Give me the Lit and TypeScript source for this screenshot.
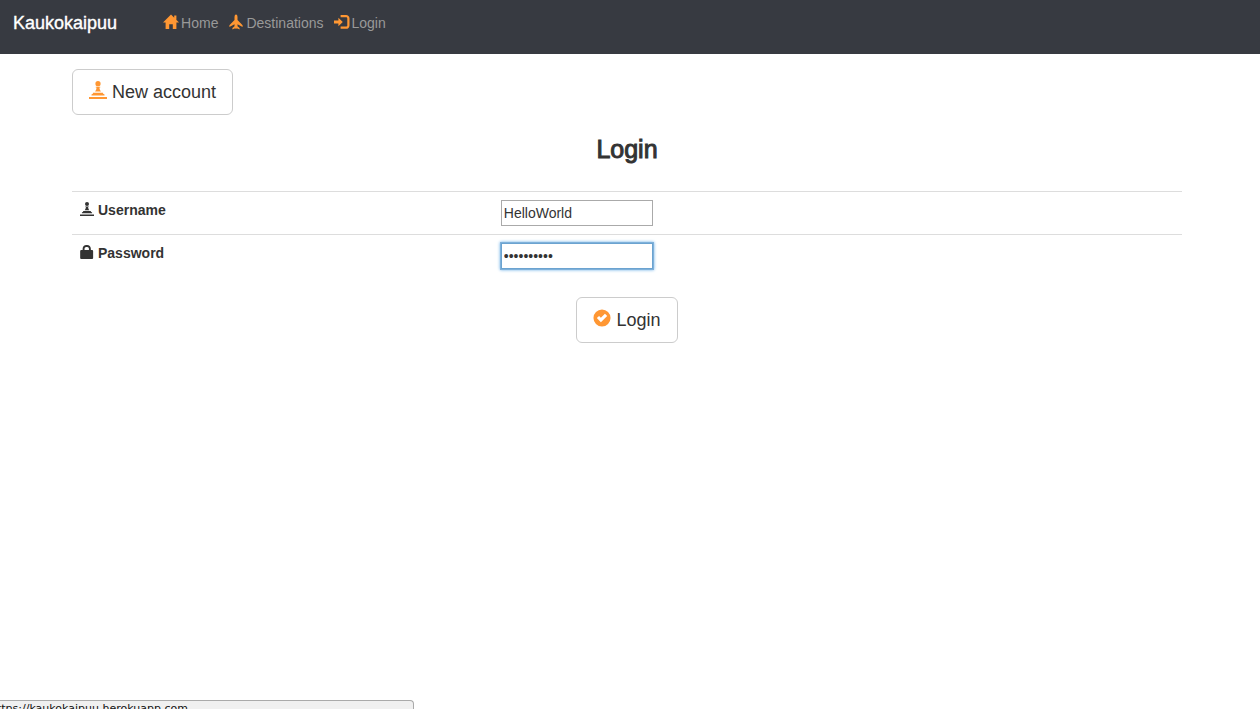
import { LitElement, html, css, svg } from "lit";
import { customElement, property } from "lit/decorators.js";

const glyphs: Record<string, unknown> = {
  home: svg`<path d="M8 .4 16 8.4H13.4V15H9.8V10.2H6.2V15H2.6V8.4H0L8 .4ZM11.2 1.6H13.4V6L11.2 4Z"/>`,
  plane: svg`<path d="M8 .4C9 .4 9.5 1.8 9.5 3.2V6L14.6 11.2V13L9.5 10.2V12.2L11.6 14V15.4L8.8 14.2 8 15 7.2 14.2 4.4 15.4V14L6.5 12.2V10.2L1.4 13V11.2L6.5 6V3.2C6.5 1.8 7 .4 8 .4Z"/>`,
  enter: svg`<path d="M0 6.4H4.4V3.8L8.8 8 4.4 12.2V9.6H0Z"/><path d="M6.6 1H12C14 1 15.5 2.5 15.5 4.5V11.4C15.5 13.4 14 14.8 12 14.8H6.6V12.6H12C12.8 12.6 13.3 12.1 13.3 11.4V4.5C13.3 3.7 12.8 3.2 12 3.2H6.6Z"/>`,
  pawn: svg`<circle cx="8" cy="2.4" r="2.3"/><path d="M6 5H10V5.8H9.3C9.4 7.4 9.8 8.2 10.6 9.4H5.4C6.2 8.2 6.6 7.4 6.7 5.8H6ZM3.6 10.4H12.4V11.2L13.8 12V12.9H2.2V12L3.6 11.2ZM0 14.2H16V16H0Z"/>`,
  lock: svg`<path fill-rule="evenodd" d="M3 5.8V4.4C3 1.8 4.8 0 7.3 0H8.1C10.6 0 12.4 1.8 12.4 4.4V5.8H13.8C14.6 5.8 15 6.2 15 7V14.8C15 15.6 14.6 16 13.8 16H1.4C.6 16 .2 15.6.2 14.8V7C.2 6.2.6 5.8 1.4 5.8ZM5.2 5.8H10.2V4.4C10.2 3 9.4 2.2 8.3 2.2H7.1C6 2.2 5.2 3 5.2 4.4Z"/>`,
  check: svg`<path fill-rule="evenodd" d="M8 .4A7.6 7.6 0 1 1 8 15.6 7.6 7.6 0 0 1 8 .4ZM3.4 8 7 11.8 12.6 6.2 10.6 4.2 7 7.8 5.4 6.2Z"/>`,
};

@customElement("glyph-icon")
class GlyphIcon extends LitElement {
  @property() name = "home";
  static styles = css`
    :host { display: inline-block; width: 1em; height: 1em; flex: none; }
    svg { display: block; width: 100%; height: 100%; fill: currentColor; }
  `;
  render() {
    return html`<svg viewBox="0 0 16 16" aria-hidden="true">${glyphs[this.name]}</svg>`;
  }
}

@customElement("app-root")
class AppRoot extends LitElement {
  static styles = css`
    :host {
      display: block;
      min-height: 100vh;
      background: #fff;
      color: #333;
      font: 14px/20px "Liberation Sans", Arial, sans-serif;
    }
    * { box-sizing: border-box; }
    .navbar {
      display: flex;
      align-items: flex-start;
      gap: 46px;
      height: 54px;
      padding: 13px;
      background: #373a41;
    }
    .brand { color: #fff; font-size: 18px; text-decoration: none; -webkit-text-stroke: thin; }
    .links { display: flex; gap: 10px; }
    .link {
      display: flex;
      gap: 2px;
      color: #999;
      text-decoration: none;
    }
    .link:hover { color: #fff; }
    .link glyph-icon { font-size: 16px; margin-top: 1px; }
    .accent { color: #ff9733; }
    .container { padding: 15px 78px 20px 72px; }
    .button {
      display: inline-flex;
      align-items: flex-start;
      gap: 5px;
      padding: 10px 16px;
      border: 1px solid #ccc;
      border-radius: 6px;
      background: #fff;
      color: #333;
      font: 18px/24px "Liberation Sans", Arial, sans-serif;
      text-decoration: none;
      cursor: pointer;
    }
    .button glyph-icon { margin-top: 1px; }
    .title {
      margin: 20px 0 28px;
      font-size: 25px;
      line-height: 28px;
      font-weight: 400;
      text-align: center;
      -webkit-text-stroke: 1px;
    }
    .row {
      display: grid;
      grid-template-columns: 38% 1fr;
      padding: 8px 0;
      border-top: 1px solid #ddd;
    }
    .label { display: flex; gap: 4px; padding: 0 8px; font-weight: 700; }
    .label glyph-icon { margin-top: 2px; }
    .cell { padding: 0 7px; }
    .input {
      display: block;
      width: 152px;
      height: 26px;
      padding: 2px;
      border: 1px solid #aaa;
      border-radius: 0;
      outline: 0;
      background: #fff;
      color: #333;
      font: 14px/20px "Liberation Sans", Arial, sans-serif;
    }
    .active { border-color: #6ba3d0; box-shadow: 0 0 0 1px #7fb1da, 0 0 3px 1px #6cb0e8; }
    .actions { display: flex; justify-content: center; margin-top: 20px; }
    .status {
      position: fixed;
      left: -1px;
      bottom: 0;
      width: 415px;
      max-width: 100%;
      height: 9px;
      overflow: hidden;
      border: 1px solid #aaa;
      border-bottom: 0;
      border-top-right-radius: 4px;
      background: #f0f0f0;
      color: #111;
      font: 11px/16px "DejaVu Sans", sans-serif;
      white-space: nowrap;
    }
    .url { margin-left: -10px; }
  `;

  render() {
    return html`
      <nav class="navbar">
        <a class="brand" href="#">Kaukokaipuu</a>
        <div class="links">
          <a class="link" href="#"><glyph-icon class="accent" name="home"></glyph-icon>Home</a>
          <a class="link" href="#"><glyph-icon class="accent" name="plane"></glyph-icon>Destinations</a>
          <a class="link" href="#"><glyph-icon class="accent" name="enter"></glyph-icon>Login</a>
        </div>
      </nav>
      <main class="container">
        <a class="button" href="#"><glyph-icon class="accent" name="pawn"></glyph-icon>New account</a>
        <h3 class="title">Login</h3>
        <form @submit=${(e: Event) => e.preventDefault()}>
          <div class="row">
            <label class="label" for="username"><glyph-icon name="pawn"></glyph-icon>Username</label>
            <div class="cell"><input class="input" id="username" type="text" .value=${"HelloWorld"} /></div>
          </div>
          <div class="row">
            <label class="label" for="password"><glyph-icon name="lock"></glyph-icon>Password</label>
            <div class="cell"><input class="input active" id="password" type="password" .value=${"helloworld"} /></div>
          </div>
          <div class="actions">
            <button class="button" type="submit"><glyph-icon class="accent" name="check"></glyph-icon>Login</button>
          </div>
        </form>
      </main>
      <div class="status"><span class="url">https://kaukokaipuu.herokuapp.com</span></div>
    `;
  }
}
